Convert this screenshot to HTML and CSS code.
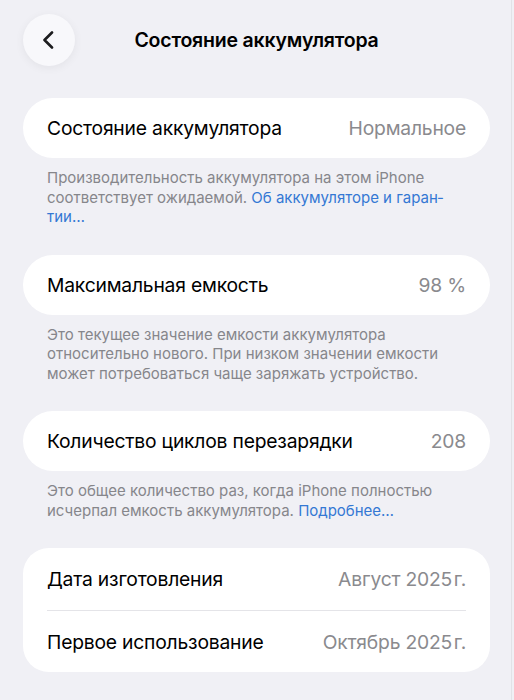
FILE: index.html
```html
<!DOCTYPE html>
<html lang="ru">
<head>
    <meta charset="UTF-8">
    <meta name="viewport" content="width=device-width, initial-scale=1.0">
    <title>Состояние аккумулятора</title>
    <link rel="stylesheet" href="styles.css">
</head>
<body>
    <div class="screen">
        <header class="nav-bar">
            <a class="back-button" href="#" aria-label="Назад">
                <svg width="12" height="18" viewBox="0 0 12 18">
                    <path d="M10 1.5 L2.5 9 L10 16.5" fill="none" stroke="#1c1c1e" stroke-width="2.6" stroke-linecap="round" stroke-linejoin="round"/>
                </svg>
            </a>
            <h1 class="nav-title">Состояние аккумулятора</h1>
        </header>

        <section class="group">
            <div class="card">
                <div class="row">
                    <span class="row-label">Состояние аккумулятора</span>
                    <span class="row-value">Нормальное</span>
                </div>
            </div>
            <p class="footnote">Производительность аккумулятора на этом iPhone соответствует ожидаемой. <a href="#">Об аккумуляторе и гаран&shy;тии…</a></p>
        </section>

        <section class="group">
            <div class="card">
                <div class="row">
                    <span class="row-label">Максимальная емкость</span>
                    <span class="row-value">98 %</span>
                </div>
            </div>
            <p class="footnote">Это текущее значение емкости аккумулятора относительно нового. При низком значении емкости может потребоваться чаще заряжать устройство.</p>
        </section>

        <section class="group">
            <div class="card">
                <div class="row">
                    <span class="row-label">Количество циклов перезарядки</span>
                    <span class="row-value">208</span>
                </div>
            </div>
            <p class="footnote">Это общее количество раз, когда iPhone полностью исчерпал емкость аккумулятора. <a href="#">Подробнее…</a></p>
        </section>

        <section class="group">
            <div class="card card-list">
                <div class="row">
                    <span class="row-label">Дата изготовления</span>
                    <span class="row-value">Август 2025&#8202;г.</span>
                </div>
                <div class="row">
                    <span class="row-label">Первое использование</span>
                    <span class="row-value">Октябрь 2025&#8202;г.</span>
                </div>
            </div>
        </section>
    </div>
</body>
</html>
```

FILE: styles.css
```css
* {
    box-sizing: border-box;
    margin: 0;
    padding: 0;
}

body {
    background-color: #f0f0f5;
    font-family: Inter, "Noto Sans", "Liberation Sans", sans-serif;
    color: #000;
    overflow: hidden;
}

.screen {
    width: 512px;
    min-height: 700px;
    border-right: 1px solid #e2e2e7;
    padding: 14px 21px 0 23px;
}

.nav-bar {
    display: flex;
    align-items: center;
    height: 52px;
    position: relative;
    margin-bottom: 32px;
}

.back-button {
    width: 52px;
    height: 52px;
    border-radius: 50%;
    background-color: #f8f8fb;
    box-shadow: 0 2px 10px rgba(0, 0, 0, 0.06);
    display: flex;
    align-items: center;
    justify-content: center;
    padding-right: 3px;
}

.nav-title {
    position: absolute;
    left: 0;
    right: 0;
    text-align: center;
    font-size: 19.5px;
    font-weight: 600;
    letter-spacing: -0.2px;
    pointer-events: none;
}

.group {
    margin-bottom: 28px;
}

.card {
    background-color: #fff;
    border-radius: 30px;
    padding: 0 24px;
}

.card-list {
    border-radius: 26px;
}

.row {
    display: flex;
    justify-content: space-between;
    align-items: center;
    height: 60px;
    font-size: 19.3px;
    letter-spacing: -0.2px;
}

.card-list .row {
    height: 62px;
}

.card-list .row + .row {
    border-top: 1px solid #e4e4e8;
}

.row-value {
    color: #8a8a8e;
}

.footnote {
    padding: 10px 24px 0;
    font-size: 15px;
    line-height: 19.5px;
    color: #86868b;
    hyphens: manual;
}

.footnote a {
    color: #3478d4;
    text-decoration: none;
}
```
